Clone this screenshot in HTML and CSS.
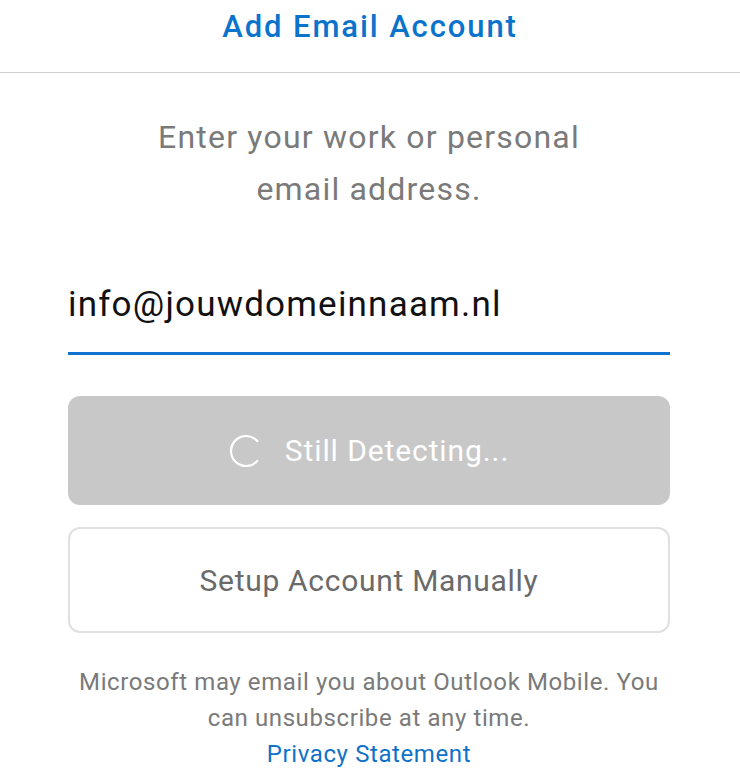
FILE: index.html
```html
<!DOCTYPE html>
<html lang="en">
<head>
    <meta charset="UTF-8">
    <meta name="viewport" content="width=device-width, initial-scale=1.0">
    <title>Add Email Account</title>
    <link rel="stylesheet" href="styles.css">
</head>
<body>
    <header class="top-bar">
        <h1 class="top-title">Add Email Account</h1>
    </header>
    <main class="content">
        <p class="intro">Enter your work or personal<br>email address.</p>
        <div class="email-field">info@jouwdomeinnaam.nl</div>
        <button class="detect-btn" type="button">
            <svg class="spinner" width="34" height="34" viewBox="0 0 34 34">
                <circle cx="17" cy="17" r="15" fill="none" stroke="#ffffff" stroke-width="2.2" stroke-dasharray="74 20.2" transform="rotate(38 17 17)"/>
            </svg>
            <span>Still Detecting...</span>
        </button>
        <button class="manual-btn" type="button">Setup Account Manually</button>
        <p class="notice">
            Microsoft may email you about Outlook Mobile. You<br>can unsubscribe at any time.<br>
            <a href="#" class="privacy">Privacy Statement</a>
        </p>
    </main>
</body>
</html>
```

FILE: styles.css
```css
body {
    margin: 0;
    background-color: #ffffff;
    font-family: Roboto, "Liberation Sans", sans-serif;
}
.top-bar {
    height: 72px;
    border-bottom: 1px solid #d0d0d0;
    display: flex;
    justify-content: center;
}
.top-title {
    margin: 0;
    padding-top: 8px;
    font-size: 31px;
    line-height: 38px;
    font-weight: 500;
    letter-spacing: 1.9px;
    color: #0a74cc;
}
.content {
    padding: 0 70px 0 68px;
}
.intro {
    margin: 38px 0 0;
    text-align: center;
    font-size: 32px;
    line-height: 52px;
    letter-spacing: 1.2px;
    color: #7a7a7a;
}
.email-field {
    margin-top: 70px;
    padding-bottom: 27px;
    font-size: 35px;
    line-height: 40px;
    letter-spacing: 1.2px;
    color: #111111;
    border-bottom: 3px solid #0f73cf;
}
.detect-btn, .manual-btn {
    display: flex;
    align-items: center;
    justify-content: center;
    width: 100%;
    border-radius: 12px;
    font-family: inherit;
    font-size: 30px;
}
.detect-btn {
    margin-top: 41px;
    height: 109px;
    gap: 22px;
    border: none;
    background-color: #c8c8c8;
    color: #ffffff;
    letter-spacing: 0.9px;
    padding: 0;
}
.manual-btn {
    margin-top: 22px;
    height: 106px;
    border: 2px solid #e0e0e0;
    background-color: #ffffff;
    color: #6a6a6a;
    letter-spacing: 0.7px;
}
.notice {
    margin: 31px 0 0;
    text-align: center;
    font-size: 24px;
    line-height: 36px;
    letter-spacing: 0.6px;
    color: #7a7a7a;
}
.privacy {
    color: #0f72c8;
    text-decoration: none;
}
```
